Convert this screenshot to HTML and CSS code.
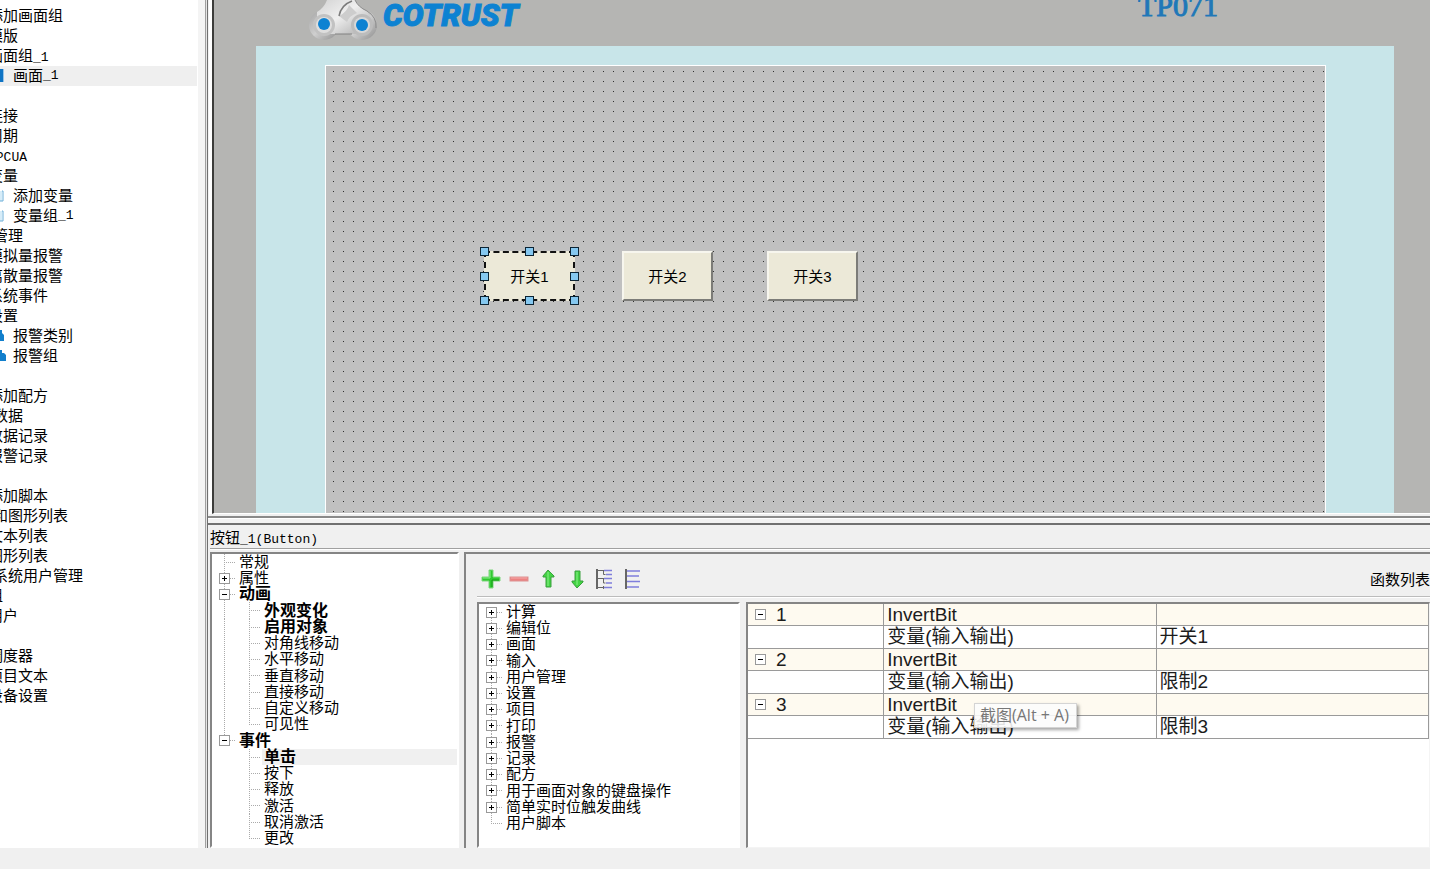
FILE: index.html
```html
<!DOCTYPE html>
<html lang="zh-CN">
<head>
<meta charset="utf-8">
<title>按钮_1(Button)</title>
<link rel="stylesheet" href="styles.css">
</head>
<body>
<div class="workspace">
  <nav class="project" aria-label="项目">
    <ul class="project-list">
      <li>添加画面组</li>
      <li>模版</li>
      <li>画面组<span class="mono">_1</span></li>
      <li class="leaf selected"><svg class="leaf-icon" viewBox="0 0 6 16"><path d="M0 1H3V14H0Z" fill="#0f74c4"/><path d="M3 1H4V14H3Z" fill="#9ac4e6"/></svg>画面<span class="mono">_1</span></li>
      <li></li>
      <li>连接</li>
      <li>周期</li>
      <li><span class="mono">OPCUA</span></li>
      <li>变量</li>
      <li class="leaf"><svg class="leaf-icon" viewBox="0 0 6 16"><path d="M0 3H2V13H0Z" fill="#d6ecf8"/><path d="M2 3H3V13H0" fill="none" stroke="#6aaed8"/></svg>添加变量</li>
      <li class="leaf"><svg class="leaf-icon" viewBox="0 0 6 16"><path d="M0 3H2V13H0Z" fill="#d6ecf8"/><path d="M2 3H3V13H0" fill="none" stroke="#6aaed8"/></svg>变量组<span class="mono">_1</span></li>
      <li class="root">管理</li>
      <li>模拟量报警</li>
      <li>离散量报警</li>
      <li>系统事件</li>
      <li>设置</li>
      <li class="leaf"><svg class="leaf-icon" viewBox="0 0 6 16"><path d="M0 2H2V5L4 7V13H0Z" fill="#127fcc"/></svg>报警类别</li>
      <li class="leaf"><svg class="leaf-icon" viewBox="0 0 6 16"><path d="M0 2H2V5H4L6 7V13H0Z" fill="#127fcc"/></svg>报警组</li>
      <li></li>
      <li>添加配方</li>
      <li class="root">数据</li>
      <li>数据记录</li>
      <li>报警记录</li>
      <li></li>
      <li>添加脚本</li>
      <li class="root">和图形列表</li>
      <li>文本列表</li>
      <li>图形列表</li>
      <li class="root">系统用户管理</li>
      <li>组</li>
      <li>用户</li>
      <li></li>
      <li>调度器</li>
      <li>项目文本</li>
      <li>设备设置</li>
    </ul>
  </nav>

  <main class="editor">
    <section class="stage">
      <header class="device-head">
        <div class="brand">
          <svg class="brand-mark" viewBox="0 0 68 40" role="img" aria-label="COTRUST">
            <defs>
              <linearGradient id="metal" x1="0" y1="0" x2="1" y2="1">
                <stop offset="0" stop-color="#d2d2d2"/><stop offset=".45" stop-color="#efefef"/><stop offset="1" stop-color="#a8a8a8"/>
              </linearGradient>
              <linearGradient id="ring" x1="0" y1="0" x2="1" y2="1">
                <stop offset="0" stop-color="#a4a4a4"/><stop offset=".5" stop-color="#cfcfcf"/><stop offset="1" stop-color="#8c8c8c"/>
              </linearGradient>
            </defs>
            <circle cx="15" cy="25" r="15" fill="url(#ring)"/>
            <circle cx="53" cy="25" r="15" fill="url(#ring)"/>
            <path d="M8 12Q15 8 18 0H46Q49 7 58 11L62 18L52 34H26L14 34L8 22Z" fill="url(#metal)"/>
            <path d="M30 16Q38 12 40 5L48 13Q40 16 38 22Z" fill="#cdcdcd"/>
            <path d="M30 16Q32 5 43 1" fill="none" stroke="#7b7b7b" stroke-width="1.5"/>
            <path d="M46 0Q49 7 58 11Q68 17 67 28" fill="none" stroke="#8a8a8a"/>
            <path d="M26 34H43" stroke="#828282"/>
            <circle cx="15" cy="25" r="11" fill="#c2c2c2"/>
            <circle cx="53" cy="25" r="11" fill="#bcbcbc"/>
            <circle cx="15" cy="25" r="8" fill="#dedede"/>
            <circle cx="53" cy="25" r="8" fill="#d8d8d8"/>
            <circle cx="15" cy="24" r="6" fill="#0d82d2"/>
            <circle cx="53" cy="25" r="6" fill="#0d82d2"/>
          </svg>
          <span class="brand-name">COTRUST</span>
        </div>
        <span class="model">TP071</span>
      </header>
      <div class="bezel">
        <div class="screen">
          <button class="hmi-button first" type="button">开关1
            <i class="grip nw"></i><i class="grip n"></i><i class="grip ne"></i><i class="grip w"></i><i class="grip e"></i><i class="grip sw"></i><i class="grip s"></i><i class="grip se"></i>
          </button>
          <button class="hmi-button second" type="button">开关2</button>
          <button class="hmi-button third" type="button">开关3</button>
        </div>
      </div>
    </section>

    <section class="inspector">
      <h2 class="inspector-title">按钮<span class="mono">_1(Button)</span></h2>
      <div class="inspector-body">
        <ul class="tree props">
          <li><span class="c1"></span><span class="label">常规</span></li>
          <li><span class="c1"><button class="toggle plus" type="button" aria-label="展开 属性"></button></span><span class="label">属性</span></li>
          <li><span class="c1"><button class="toggle" type="button" aria-label="折叠 动画"></button></span><span class="label strong">动画</span></li>
          <li><span class="c1 pass"></span><span class="c2"></span><span class="label strong">外观变化</span></li>
          <li><span class="c1 pass"></span><span class="c2"></span><span class="label strong">启用对象</span></li>
          <li><span class="c1 pass"></span><span class="c2"></span><span class="label">对角线移动</span></li>
          <li><span class="c1 pass"></span><span class="c2"></span><span class="label">水平移动</span></li>
          <li><span class="c1 pass"></span><span class="c2"></span><span class="label">垂直移动</span></li>
          <li><span class="c1 pass"></span><span class="c2"></span><span class="label">直接移动</span></li>
          <li><span class="c1 pass"></span><span class="c2"></span><span class="label">自定义移动</span></li>
          <li><span class="c1 pass"></span><span class="c2 last"></span><span class="label">可见性</span></li>
          <li><span class="c1 last"><button class="toggle" type="button" aria-label="折叠 事件"></button></span><span class="label strong">事件</span></li>
          <li><span class="c1 blank"></span><span class="c2"></span><span class="label strong current">单击</span></li>
          <li><span class="c1 blank"></span><span class="c2"></span><span class="label">按下</span></li>
          <li><span class="c1 blank"></span><span class="c2"></span><span class="label">释放</span></li>
          <li><span class="c1 blank"></span><span class="c2"></span><span class="label">激活</span></li>
          <li><span class="c1 blank"></span><span class="c2"></span><span class="label">取消激活</span></li>
          <li><span class="c1 blank"></span><span class="c2 last"></span><span class="label">更改</span></li>
        </ul>

        <div class="functions">
          <div class="toolbar">
            <button type="button" aria-label="添加"><svg viewBox="0 0 20 20"><path d="M8 1h4v7h7v4h-7v7H8v-7H1V8h7Z" fill="#2fc92f" stroke="#7fd67f"/><path d="M9 2v7H2" fill="none" stroke="#8eee8e"/><path d="M11 18v-7h7" fill="none" stroke="#169c16"/></svg></button>
            <button type="button" aria-label="删除"><svg viewBox="0 0 20 20"><rect x="1" y="8" width="18" height="4" fill="#ec8282" stroke="#dc9292"/><path d="M2 9h16" stroke="#f5a9a9"/></svg></button>
            <button type="button" aria-label="上移"><svg viewBox="0 0 20 20"><path d="M11 1l6 6v1h-3v10H9V8H6V7Z" fill="#43d443" stroke="#3a9f3e"/><path d="M11 3v14" stroke="#8bef8b"/></svg></button>
            <button type="button" aria-label="下移"><svg viewBox="0 0 20 20"><path d="M12 19l6-6v-1h-3V2h-5v10H7v1Z" fill="#43d443" stroke="#3a9f3e"/><path d="M12 3v13" stroke="#8bef8b"/></svg></button>
            <button type="button" aria-label="展开全部"><svg viewBox="0 0 20 20"><path d="M4 0v20" stroke="#666" stroke-width="2"/><path d="M5 1.500h6M5 9.500h6M5 18.500h6M10.500 2v3.500h2M10.500 10v4h2M10.500 17v3" fill="none" stroke="#666"/><path d="M11 1.500h8M13 5.500h6M11 9.500h8M13 14h6M11 18.500h8" stroke="#7f7edb" stroke-width="1.500"/></svg></button>
            <button type="button" aria-label="折叠全部"><svg viewBox="0 0 20 20"><path d="M5 0v20" stroke="#666" stroke-width="2"/><path d="M6 2h13M6 7h12M6 12.500h13M6 18h12" stroke="#7f7edb" stroke-width="1.500"/></svg></button>
            <span class="toolbar-title">函数列表</span>
          </div>
          <div class="function-panes">
            <ul class="tree catalog">
              <li><span class="c1 start"><button class="toggle plus" type="button" aria-label="展开 计算"></button></span><span class="label">计算</span></li>
              <li><span class="c1"><button class="toggle plus" type="button" aria-label="展开 编辑位"></button></span><span class="label">编辑位</span></li>
              <li><span class="c1"><button class="toggle plus" type="button" aria-label="展开 画面"></button></span><span class="label">画面</span></li>
              <li><span class="c1"><button class="toggle plus" type="button" aria-label="展开 输入"></button></span><span class="label">输入</span></li>
              <li><span class="c1"><button class="toggle plus" type="button" aria-label="展开 用户管理"></button></span><span class="label">用户管理</span></li>
              <li><span class="c1"><button class="toggle plus" type="button" aria-label="展开 设置"></button></span><span class="label">设置</span></li>
              <li><span class="c1"><button class="toggle plus" type="button" aria-label="展开 项目"></button></span><span class="label">项目</span></li>
              <li><span class="c1"><button class="toggle plus" type="button" aria-label="展开 打印"></button></span><span class="label">打印</span></li>
              <li><span class="c1"><button class="toggle plus" type="button" aria-label="展开 报警"></button></span><span class="label">报警</span></li>
              <li><span class="c1"><button class="toggle plus" type="button" aria-label="展开 记录"></button></span><span class="label">记录</span></li>
              <li><span class="c1"><button class="toggle plus" type="button" aria-label="展开 配方"></button></span><span class="label">配方</span></li>
              <li><span class="c1"><button class="toggle plus" type="button" aria-label="展开 键盘操作"></button></span><span class="label">用于画面对象的键盘操作</span></li>
              <li><span class="c1"><button class="toggle plus" type="button" aria-label="展开 触发曲线"></button></span><span class="label">简单实时位触发曲线</span></li>
              <li><span class="c1 last"></span><span class="label">用户脚本</span></li>
            </ul>
            <div class="grid-pane">
              <table class="calls">
                <colgroup><col class="col-no"><col class="col-name"><col></colgroup>
                <tbody>
                  <tr class="call"><td><div class="no"><button class="toggle" type="button" aria-label="折叠 1"></button>1</div></td><td>InvertBit</td><td></td></tr>
                  <tr><td></td><td>变量(输入输出)</td><td>开关1</td></tr>
                  <tr class="call"><td><div class="no"><button class="toggle" type="button" aria-label="折叠 2"></button>2</div></td><td>InvertBit</td><td></td></tr>
                  <tr><td></td><td>变量(输入输出)</td><td>限制2</td></tr>
                  <tr class="call"><td><div class="no"><button class="toggle" type="button" aria-label="折叠 3"></button>3</div></td><td>InvertBit</td><td></td></tr>
                  <tr><td></td><td>变量(输入输出)</td><td>限制3</td></tr>
                </tbody>
              </table>
              <div class="tip" role="tooltip">截图(Alt + A)</div>
            </div>
          </div>
        </div>
      </div>
    </section>
  </main>
</div>
<footer class="status"></footer>
</body>
</html>
```

FILE: styles.css
```css
* { box-sizing: border-box; }

body {
  margin: 0;
  height: 100vh;
  display: flex;
  flex-direction: column;
  overflow: hidden;
  background: #f0f0f0;
  color: #000;
  font-family: "Liberation Sans", "Noto Sans CJK SC", sans-serif;
  font-size: 15px;
}

ul { margin: 0; padding: 0; list-style: none; }
button { font: inherit; color: inherit; padding: 0; margin: 0; }
.mono { font-family: "Liberation Mono", monospace; font-size: 13px; }

.workspace { flex: 1; min-height: 0; display: flex; }
.status { height: 21px; flex: none; }

/* Project tree */
.project {
  flex: none;
  width: 208px;
  padding-right: 7px;
  overflow: hidden;
  background: linear-gradient(to right, #fff 198px, #f4f4f4 198px, #f4f4f4 205px, #a0a0a0 205px, #a0a0a0 206px, #e4e4e4 206px, #e4e4e4 207px, #707070 207px);
}
.project-list { padding-top: 6px; margin-right: 4px; }
.project-list li {
  height: 20px;
  text-indent: -12px;
  line-height: 20px;
  white-space: nowrap;
}
.project-list .root { text-indent: -7px; }
.project-list .leaf { display: flex; align-items: center; gap: 7px; text-indent: 0; }
.project-list .leaf .mono { margin-left: -7px; }
.project-list .selected { background: #efefef; }
.leaf-icon { width: 6px; height: 16px; flex: none; }

/* Editor column */
.editor { flex: 1; min-width: 0; display: flex; flex-direction: column; }

.stage {
  flex: 1;
  min-height: 0;
  display: flex;
  flex-direction: column;
  overflow: hidden;
  margin-left: 4px;
  border-left: 2px solid #3c3c3a;
  border-bottom: 1px solid #fff;
  background: #b5b5b3;
  box-shadow: -3px 0 0 #fff;
}
.device-head {
  flex: none;
  height: 46px;
  padding: 0 212px 0 95px;
  display: flex;
  justify-content: space-between;
  align-items: flex-start;
  overflow: hidden;
}
.brand { display: flex; gap: 6px; }
.brand-mark { width: 68px; height: 40px; }
.brand-name {
  color: #0d82d2;
  font-family: Roboto, "Liberation Sans", sans-serif;
  font-size: 31px;
  font-weight: 900;
  font-style: italic;
  line-height: 32px;
  -webkit-text-stroke: 1px #0d82d2;
}
.model {
  margin-top: -11px;
  color: #1f78b8;
  font-family: "Liberation Serif", serif;
  font-size: 30px;
  line-height: 34px;
  -webkit-text-stroke: 1px #1f78b8;
}
.bezel {
  flex: 1;
  min-height: 0;
  display: flex;
  margin: 0 36px 0 42px;
  padding: 19px 68px 0 69px;
  background: #c8e5e9;
}
.screen {
  position: relative;
  flex: 1;
  border: 1px solid #fff;
  border-bottom: 0;
  background: #c0c0c0 conic-gradient(from 270deg at 1px 1px, #303030 90deg, transparent 0) 7px 5px / 10px 10px;
}
.hmi-button {
  position: absolute;
  top: 185px;
  width: 91px;
  height: 50px;
  padding-bottom: 2px;
  border: 2px solid;
  border-color: #f7f6ee #7c7c78 #7c7c78 #f7f6ee;
  background: #ece9d8;
}
.hmi-button.first { left: 158px; border: 2px dashed #111; }
.hmi-button.second { left: 296px; }
.hmi-button.third { left: 441px; }
.grip { position: absolute; width: 9px; height: 9px; border: 1px solid #0c2434; background: #85c8f0; }
.grip.nw, .grip.n, .grip.ne { top: -6px; }
.grip.w, .grip.e { top: 19px; }
.grip.sw, .grip.s, .grip.se { bottom: -6px; }
.grip.nw, .grip.w, .grip.sw { left: -6px; }
.grip.n, .grip.s { left: 39px; }
.grip.ne, .grip.e, .grip.se { right: -6px; }

/* Inspector */
.inspector {
  flex: none;
  padding-left: 2px;
  background: linear-gradient(to bottom, #f0f0f0 2px, #8a8a8a 2px, #8a8a8a 4px, #fff 4px, #fff 5px, #f2f2f2 5px, #f2f2f2 9px, #707070 9px, #707070 11px, transparent 11px);
}
.inspector-title {
  margin: 0;
  padding-top: 12px;
  height: 35px;
  border-bottom: 1px solid #a0a0a0;
  font-size: 15px;
  font-weight: normal;
  line-height: 24px;
}
.inspector-body { display: flex; gap: 5px; padding-top: 2px; border-top: 1px solid #fff; }

.tree {
  background-color: #fff;
  border: 2px solid;
  border-color: #858585 #fff #fff #858585;
  overflow: hidden;
}
.tree li { display: flex; align-items: center; height: 16px; white-space: nowrap; }
.tree li:nth-child(4n) { height: 17px; }
.props { flex: none; width: 249px; }

.c1, .c2 {
  flex: none;
  align-self: stretch;
  display: flex;
  align-items: center;
  width: 25px;
  padding: 0 1px 0 12px;
  background-image:
    repeating-linear-gradient(to bottom, #aaa 0 1px, transparent 1px 2px),
    repeating-linear-gradient(to right, #aaa 0 1px, transparent 1px 2px);
  background-size: 1px 100%, 100% 1px;
  background-position: 0 0, 0 8px;
  background-repeat: no-repeat;
  background-origin: content-box;
  background-clip: content-box;
}
.start { background-position: 0 8px, 0 8px; }
.pass { background-size: 1px 100%, 0 0; }
.last { background-size: 1px 8px, 100% 1px; }
.blank { background-image: none; }

.label { padding-left: 2px; line-height: 16px; }
.strong { font-size: 16px; font-weight: bold; }
.current { flex: 1; background: #f0f0f0; }

.toggle {
  flex: none;
  width: 11px;
  height: 11px;
  border: 1px solid #999;
  background: linear-gradient(#000, #000) center / 5px 1px no-repeat #fff;
}
.toggle.plus {
  background: linear-gradient(#000, #000) center / 5px 1px no-repeat, linear-gradient(#000, #000) center / 1px 5px no-repeat #fff;
}
.c1 .toggle { margin-left: -5px; }

.functions {
  flex: 1;
  min-width: 0;
  display: flex;
  flex-direction: column;
  border-top: 2px solid #858585;
  border-left: 2px solid #858585;
}
.toolbar {
  display: flex;
  align-items: center;
  gap: 8px;
  height: 43px;
  margin-left: 11px;
  padding: 8px 0 0 4px;
  border-bottom: 1px solid #bcbcbc;
}
.toolbar button { width: 20px; height: 20px; border: 0; background: none; }
.toolbar svg { display: block; width: 20px; height: 20px; }
.toolbar-title { margin-left: auto; padding-bottom: 2px; }

.function-panes { flex: 1; display: flex; gap: 6px; margin-left: 11px; padding-top: 4px; border-top: 1px solid #fff; }
.catalog { flex: none; width: 263px; }
.grid-pane {
  position: relative;
  flex: 1;
  min-width: 0;
  border: solid;
  border-width: 2px 1px 1px 2px;
  border-color: #858585 #f4f4f4 #f4f4f4 #858585;
  background: #fff;
}
.calls {
  width: 100%;
  table-layout: fixed;
  border-spacing: 0;
  font-size: 19px;
  line-height: 20px;
  color: #1c1c1c;
}
.col-no { width: 20%; }
.col-name { width: 40%; }
.calls td {
  height: 23px;
  padding: 0 4px 0 3px;
  border-right: 1px solid #9a9a9a;
  border-bottom: 1px solid #9a9a9a;
  white-space: nowrap;
}
.call td { height: 22px; background: #fefaf0; }
.no { display: flex; align-items: center; gap: 10px; padding-left: 4px; }

.tip {
  position: absolute;
  left: 226px;
  top: 99px;
  padding: 0 7px 0 5px;
  border: 1px solid #d4d4d4;
  background: rgba(252, 252, 252, .88);
  box-shadow: 2px 2px 3px rgba(0, 0, 0, .35);
  color: #777;
  font-family: "Open Sans", "Noto Sans CJK SC", sans-serif;
  font-size: 16px;
  line-height: 23px;
}
```
